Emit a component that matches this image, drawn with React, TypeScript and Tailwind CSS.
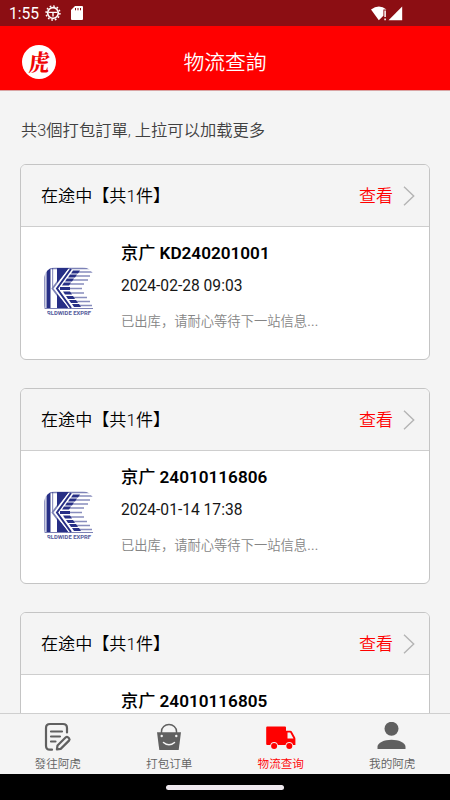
import type { ReactNode } from "react";

type Order = {
  no: string;
  time: string;
};

const orders: Order[] = [
  { no: "KD240201001", time: "2024-02-28 09:03" },
  { no: "24010116806", time: "2024-01-14 17:38" },
  { no: "24010116805", time: "2024-01-14 17:38" },
];

function StatusBar() {
  return (
    <div className="flex h-[26px] shrink-0 items-center bg-[#8c0e13] pl-[9px] text-white">
      <span className="mt-[2px] w-[36px] text-[15.6px] leading-[24px]">1:55</span>
      <svg className="h-4 w-4" viewBox="0 0 16 16" fill="none" stroke="#fff">
        <circle cx="8" cy="8" r="5.3" strokeWidth="1.7" />
        <circle cx="8" cy="8" r="6.9" strokeWidth="1.5" strokeDasharray="1.7 1.91" />
        <path d="M3.5 7.4h9M8 7.5v4" strokeWidth="1.4" />
      </svg>
      <svg className="ml-[10px] h-[14px] w-3" viewBox="0 0 12 14">
        <path d="M4 0h7q1 0 1 1v12q0 1-1 1H1q-1 0-1-1V4z" fill="#fff" />
        <path d="M4.5 2v2.3M7 2v2.3M9.5 2v2.3" stroke="#8c0e13" strokeWidth="1" />
      </svg>
      <svg className="ml-[288px] h-[15px] w-[32px]" viewBox="0 0 32 15">
        <path d="M0 3.600Q8-2.400 15.500 3.600H12.400V9.700L7.800 14.300z" fill="#fff" />
        <path d="M14.100 4.500v6.500M14.100 12.500v1.800" stroke="#fff" strokeWidth="1.5" />
        <path d="M31.200 .5v13.700H17.500z" fill="#fff" />
      </svg>
    </div>
  );
}

function Header() {
  return (
    <header className="grid h-[65px] shrink-0 grid-cols-[1fr_auto_1fr] items-center border-b border-[#d9a4a4] bg-[#ff0000] pt-[7px]">
      <div className="ml-[22px] flex h-[34px] w-[34px] items-center justify-center rounded-full bg-white">
        <span className="-skew-x-6 scale-x-90 font-['Noto_Serif_CJK_TC','Noto_Serif_CJK_SC','Noto_Sans_CJK_TC',serif] text-[23px] leading-none font-black text-[#f00505]">
          虎
        </span>
      </div>
      <h1 className="pt-[2px] text-[20.8px] leading-[28px] font-[350] text-white">物流查詢</h1>
    </header>
  );
}

function CourierLogo() {
  return (
    <svg className="h-[50px] w-[50px] rounded-xl" viewBox="0 0 50 50">
      <rect width="50" height="50" fill="#fff" />
      <g fill="#272f86">
        <path d="M0 .8h49v1.500H0z" fillOpacity=".6" />
        <path d="M2.500 1h4v40h-4z" />
        <path d="M0 1h1.500v40H0zM8 1h1.200v18L8 21z" fillOpacity=".5" />
        <path d="M13 1h12l-12 15zM13 41h12L13 27z" />
        <path d="M29 3.500h7l-2 3h-7zM26 7.500h7l-2 3h-7zM23 11.500h7l-2 3h-7zM20 15.500h7l-2 3h-7zM16 20h10v3H16zM19 24.500h7l2 3h-7zM22 29h7l2 3h-7zM25 33h7l2 3h-7zM28 37h7l2 3h-7z" />
      </g>
      <g fill="none" stroke="#272f86">
        <path d="M23 2 8.500 21.500 23 41" strokeWidth="1.800" strokeOpacity=".6" />
        <path d="M25 2 11 21.500 25 41" stroke="#fff" strokeWidth="1.200" />
        <path d="M27 2 13 21.500 27 41" strokeWidth="2" />
        <path
          d="M34 5h15M31 9h15M28 13h16M25 17h15M25 21.500h13M25 26h15M28 30.500h15M31 34.500h15M34 38.500h14"
          strokeWidth="1.700"
          strokeOpacity=".55"
        />
        <path d="M0 41.500h49" strokeWidth="1.200" strokeOpacity=".6" />
      </g>
      <text
        x="25"
        y="47.800"
        textAnchor="middle"
        textLength="44"
        lengthAdjust="spacingAndGlyphs"
        fill="#555b9c"
        fontSize="5.200"
        fontWeight="700"
      >
        RLDWIDE EXPRE
      </text>
    </svg>
  );
}

function OrderCard({ no, time }: Order) {
  return (
    <section className="h-[196px] shrink-0 overflow-hidden rounded-md border border-[#c4c4c4] bg-white">
      <div className="flex h-[62px] items-center border-b border-[#cecece] bg-[#f4f4f4] pr-[14px] pl-5 font-[350]">
        <span className="flex-1 pt-[2px] text-[17.1px] text-black">在途中【共1件】</span>
        <span className="pt-[2px] text-[17px] text-[#ff0000]">查看</span>
        <svg className="ml-[10px] h-5 w-3" viewBox="0 0 12 20" fill="none">
          <path d="M1 .8 10.700 10 1 19.200" stroke="#b4b4b4" strokeWidth="1.4" />
        </svg>
      </div>
      <div className="flex">
        <div className="w-[100px] pt-10 pl-[23px]">
          <CourierLogo />
        </div>
        <div className="pt-[14px]">
          <p className="text-[17.15px] leading-6 font-medium text-black">
            京广 <span className="font-semibold">{no}</span>
          </p>
          <p className="mt-[9px] text-[15.6px] leading-6 text-[#161616]">{time}</p>
          <p className="mt-[14px] text-[13.3px] leading-5 font-[350] text-[#858585]">
            已出库，请耐心等待下一站信息<span className="font-normal tracking-[0.3px]">...</span>
          </p>
        </div>
      </div>
    </section>
  );
}

function Tab({ label, active, children }: { label: string; active?: boolean; children: ReactNode }) {
  return (
    <div className={`flex w-[111.500px] flex-col items-center pt-2 ${active ? "text-[#ff0000]" : "text-[#606060]"}`}>
      {children}
      <span className="mt-[3px] text-[11.6px] leading-[18px] font-[350]">{label}</span>
    </div>
  );
}

function TabBar() {
  return (
    <nav className="flex h-[61px] shrink-0 border-t border-[#cfcfcf] bg-[#f4f4f4] pl-[2px]">
      <Tab label="發往阿虎">
        <svg className="h-[30px] w-[30px]" viewBox="0 0 30 30" fill="none" stroke="currentColor" strokeWidth="2.2" strokeLinecap="round" strokeLinejoin="round">
          <path d="M9 27.700H7q-4 0-4-4V6q0-4 4-4h13q4 0 4 4v4.500" />
          <path d="M8 9.500h11M8 14.500h9M8 19.500h4.500" />
          <path d="m14.500 23.500 8.300-8.200q1.200-1 2.400.2l.8.8q1.100 1.200 0 2.300l-8.300 8.300-3.800.4z" />
        </svg>
      </Tab>
      <Tab label="打包订单">
        <svg className="h-[30px] w-[30px]" viewBox="0 0 30 30" fill="none">
          <path d="M7.500 12V9.500a7.500 7 0 0 1 15 0V12" stroke="currentColor" strokeWidth="1.5" />
          <path d="M3 10.300h24L24.700 28H5.300z" fill="currentColor" />
          <circle cx="7.700" cy="14" r="1.200" fill="#f4f4f4" />
          <circle cx="22.300" cy="14" r="1.200" fill="#f4f4f4" />
          <path d="M9.500 20.500q5.500 4.600 11 0" stroke="#f4f4f4" strokeWidth="1.500" strokeLinecap="round" />
        </svg>
      </Tab>
      <Tab label="物流查询" active>
        <svg className="h-[30px] w-[30px]" viewBox="0 0 30 30" fill="currentColor">
          <path d="M1.200 4.500H19q1 0 1 1v3.200h4.300q1 0 1.500.9l3.200 5.700q.4.700.4 1.500V23h-2.300a3.900 3.900 0 0 0-7.600 0h-7.600a3.900 3.900 0 0 0-7.600 0H1.200q-1 0-1-1V5.500q0-1 1-1M21.500 10.500v6h6l-3.300-6z" fillRule="evenodd" />
          <circle cx="8.100" cy="24" r="3" />
          <circle cx="23.300" cy="24" r="3" />
        </svg>
      </Tab>
      <Tab label="我的阿虎">
        <svg className="h-[30px] w-[30px]" viewBox="0 0 30 30" fill="currentColor">
          <circle cx="14.500" cy="6.800" r="7" />
          <path d="M.5 27v-2.300c0-4.200 7-7 14-7s14 2.800 14 7V27z" />
        </svg>
      </Tab>
    </nav>
  );
}

export default function App() {
  return (
    <div className="flex h-[800px] w-[450px] flex-col overflow-hidden bg-[#f4f4f4] font-['Roboto','Noto_Sans_CJK_SC',sans-serif]">
      <StatusBar />
      <Header />
      <main className="flex min-h-0 flex-1 flex-col overflow-hidden px-5">
        <p className="mt-[28px] ml-[1px] shrink-0 text-[16.3px] leading-6 font-[350] text-[#404040]">
          共3個打包訂單, 上拉可以加载更多
        </p>
        <div className="mt-[21px] flex flex-col gap-7">
          {orders.map((order) => (
            <OrderCard key={order.no} {...order} />
          ))}
        </div>
      </main>
      <TabBar />
      <div className="flex h-[26px] shrink-0 items-center justify-center bg-black">
        <div className="h-[5px] w-[118px] rounded-full bg-[#eee8ee]" />
      </div>
    </div>
  );
}
